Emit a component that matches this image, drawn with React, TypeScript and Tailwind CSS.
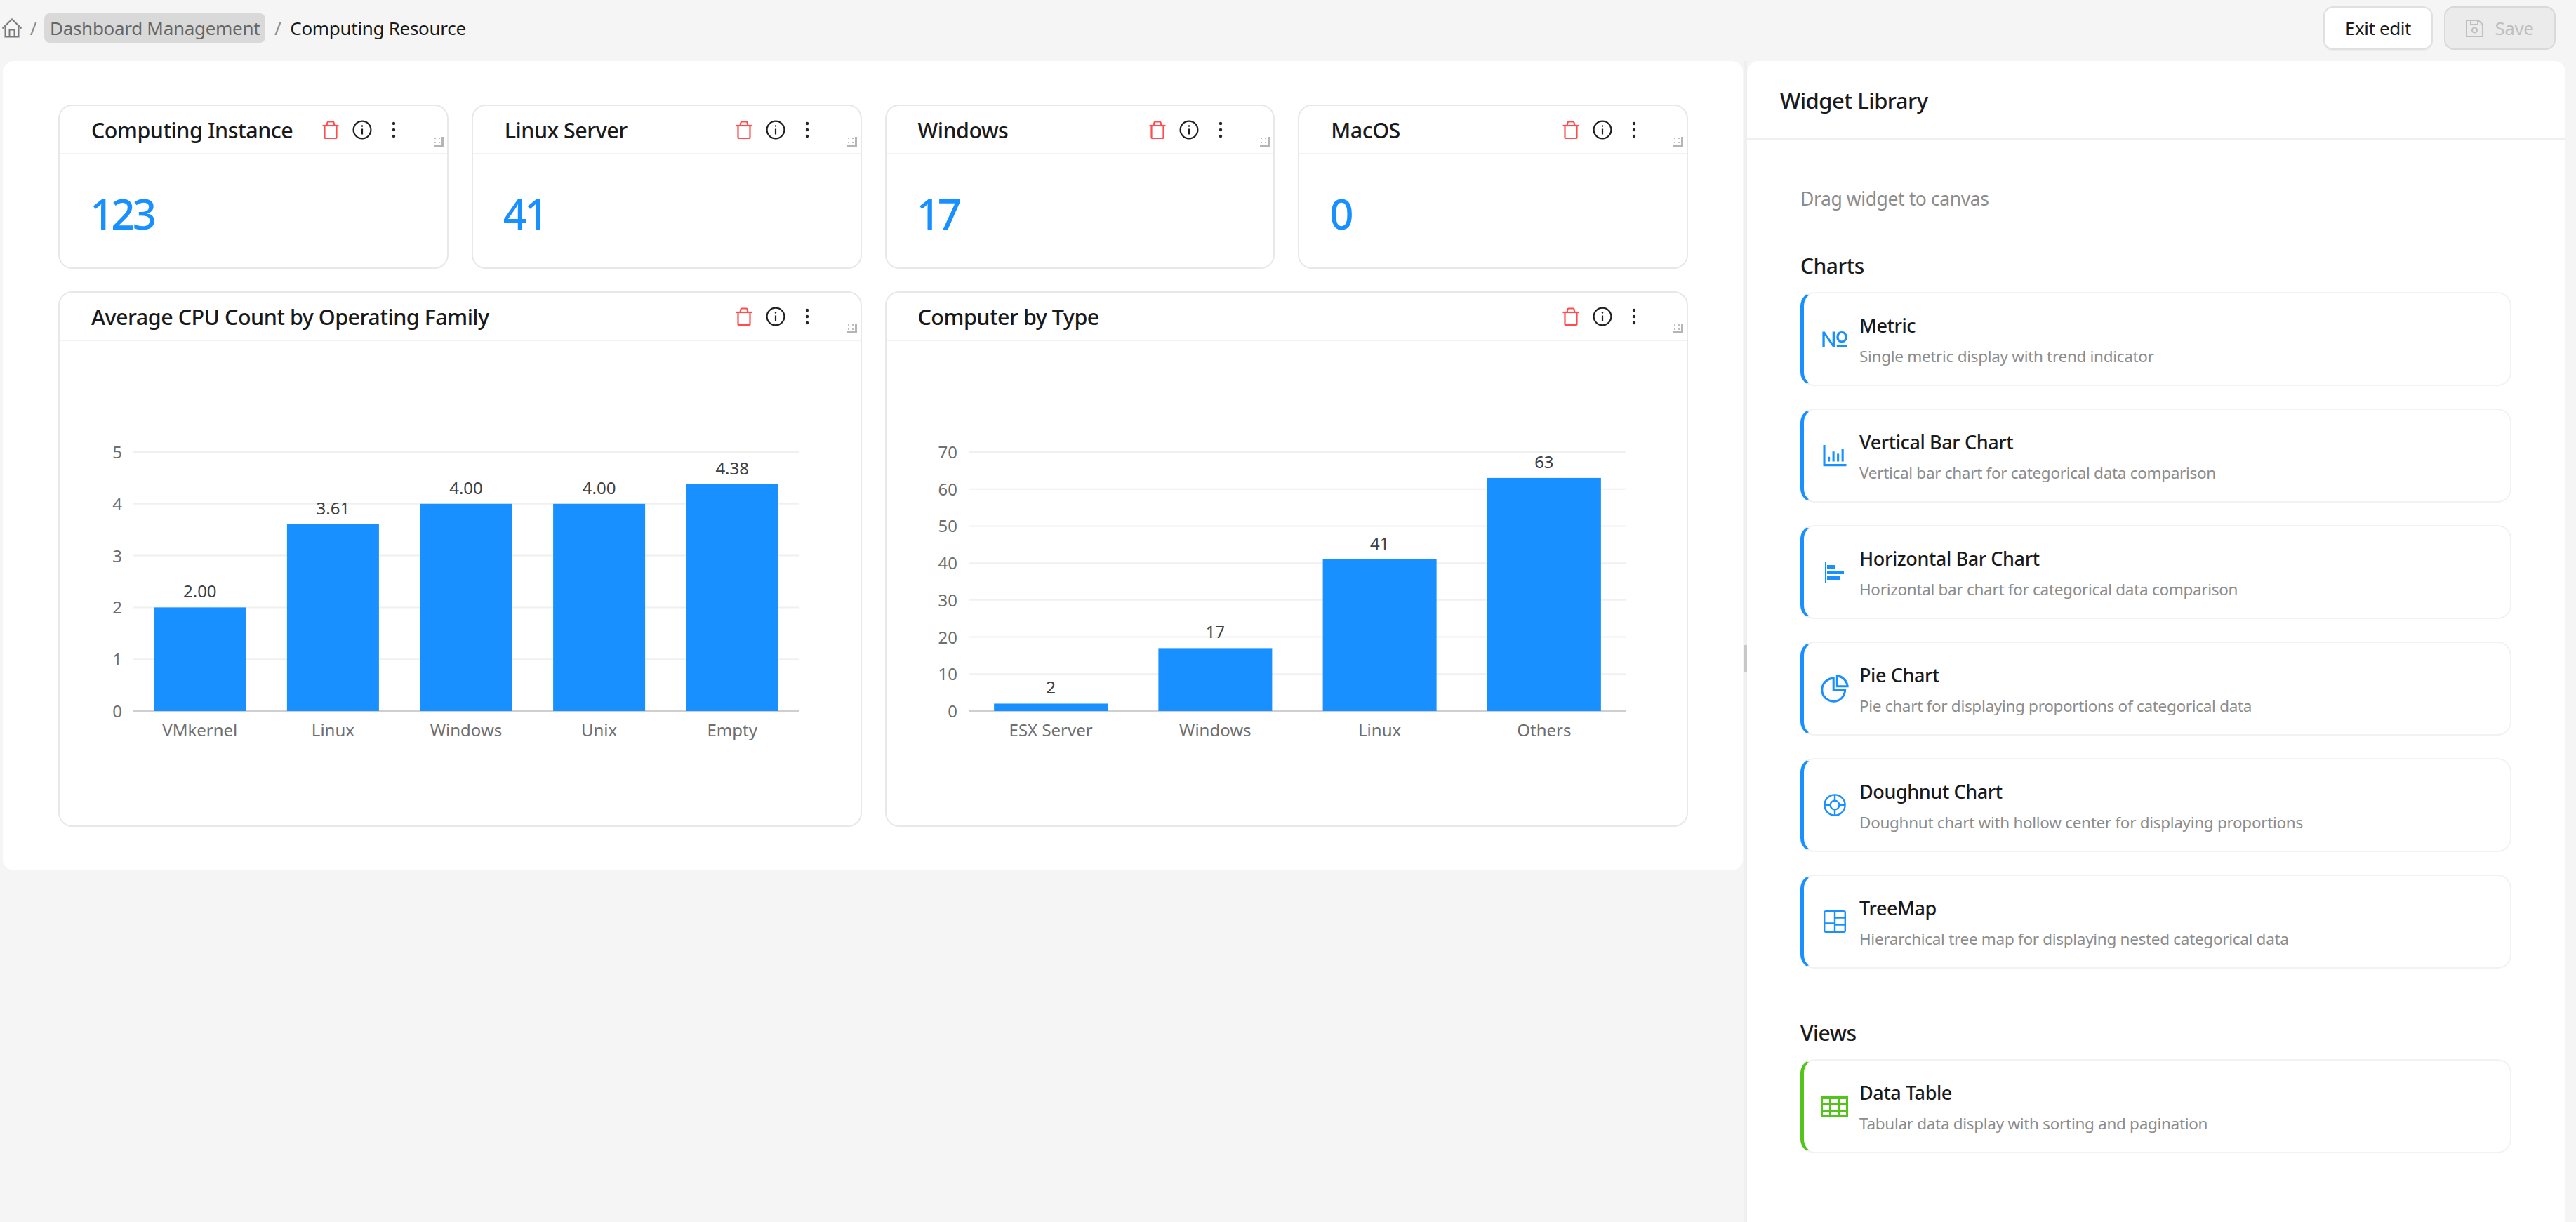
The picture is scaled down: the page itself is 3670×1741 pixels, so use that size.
import React from 'react';
import { AiOutlineFieldNumber, AiOutlineBarChart, AiOutlinePieChart } from 'react-icons/ai';

const BLUE = '#1890ff';

const TrashIcon = () => (
  <svg width="24" height="26" viewBox="0 0 24 26" fill="none" stroke="#ff4d4f" strokeWidth="2.2">
    <path d="M0.5 7h23" />
    <path d="M6.5 7l1-4.5q0.2-1 1.2-1h6.6q1 0 1.2 1l1 4.5" />
    <path d="M3.5 7v17q0 1 1 1h15q1 0 1-1V7" />
  </svg>
);

const InfoIcon = () => (
  <svg width="28" height="28" viewBox="0 0 28 28" fill="none" stroke="#1f1f1f" strokeWidth="2.2">
    <circle cx="14" cy="14" r="12.4" />
    <path d="M14 12.5v8" />
    <circle cx="14" cy="8.5" r="1.2" fill="#1f1f1f" stroke="none" />
  </svg>
);

const MoreIcon = () => (
  <svg width="6" height="24" viewBox="0 0 6 24" fill="#262626">
    <circle cx="3" cy="3" r="2.2" />
    <circle cx="3" cy="12" r="2.2" />
    <circle cx="3" cy="21" r="2.2" />
  </svg>
);

const ResizeHandle = () => (
  <svg className="absolute right-[5px] top-[44px]" width="14" height="14" viewBox="0 0 14 14">
    <path d="M11 0h3v14H0v-3h11z" fill="#b5b5b5" />
    <rect x="1" y="1" width="2" height="2" fill="#bdbdbd" />
    <rect x="7" y="1" width="2" height="2" fill="#bdbdbd" />
    <rect x="1" y="7" width="2" height="2" fill="#bdbdbd" />
    <rect x="7" y="7" width="2" height="2" fill="#bdbdbd" />
  </svg>
);

const HomeIcon = () => (
  <svg width="30" height="28" viewBox="0 0 30 28" fill="none" stroke="#7a7a7a" strokeWidth="2">
    <path d="M1.5 14.5L15 1.5l13.5 13" />
    <path d="M5.5 11v15.5h19V11" />
    <path d="M11.5 26.5V16.5h7v10" />
  </svg>
);

const SaveIcon = () => (
  <svg width="25" height="25" viewBox="0 0 25 25" fill="none" stroke="#bfbfbf" strokeWidth="2">
    <path d="M1 1h17l6 6v17H1z" />
    <path d="M7 1v6h10V1" />
    <circle cx="12.5" cy="15" r="3.5" />
  </svg>
);

const HBarIcon = () => (
  <svg width="28" height="31" viewBox="0 0 28 31" fill={BLUE}>
    <rect x="0" y="0" width="2" height="31" />
    <rect x="3" y="5" width="11" height="5" />
    <rect x="3" y="13" width="24" height="5" />
    <rect x="3" y="21" width="18" height="5" />
  </svg>
);

const DoughnutIcon = () => (
  <svg width="32" height="32" viewBox="0 0 32 32" fill="none" stroke={BLUE} strokeWidth="2.4">
    <circle cx="16" cy="16" r="14.6" />
    <circle cx="16" cy="16" r="6.4" />
    <path d="M16 1.5v8M16 22.5v8M1.5 16h8M22.5 16h8" />
  </svg>
);

const TreeMapIcon = () => (
  <svg width="32" height="32" viewBox="0 0 32 32" fill="none" stroke={BLUE} strokeWidth="2.4">
    <rect x="1.2" y="1.2" width="29.6" height="29.6" rx="2" />
    <path d="M16 1.2v29.6M1.2 18.5h14.8M16 10.5h14.8M16 20.5h14.8" />
  </svg>
);

const TableIcon = () => (
  <svg width="39" height="31" viewBox="0 0 39 31" fill="#52c41a">
    <path fillRule="evenodd" d="M0 0h39v31H0zM3 5v6h9V5zM15 5v6h9V5zM27 5v6h9V5zM3 14v6h9v-6zM15 14v6h9v-6zM27 14v6h9v-6zM3 23v5h9v-5zM15 23v5h9v-5zM27 23v5h9v-5z" />
  </svg>
);

const WidgetCard: React.FC<{ title: string; className: string; children: React.ReactNode }> = ({ title, className, children }) => (
  <div className={`relative border-2 border-[#e8e8e8] rounded-[20px] bg-white ${className}`}>
    <div className="flex items-center justify-between h-[69px] pl-[45px] pr-[53px] border-b-2 border-[#f2f2f2]">
      <span className="pt-[2px] text-[30.5px] font-medium text-[#1a1a1a] tracking-[-0.5px]">{title}</span>
      <div className="flex items-center">
        <span className="w-[45px] flex justify-center"><TrashIcon /></span>
        <span className="w-[45px] flex justify-center"><InfoIcon /></span>
        <span className="w-[45px] flex justify-center"><MoreIcon /></span>
      </div>
    </div>
    <ResizeHandle />
    {children}
  </div>
);

const MetricCard: React.FC<{ title: string; value: string }> = ({ title, value }) => (
  <WidgetCard title={title} className="h-[234px]">
    <div className="pl-[43px] pt-[48px] text-[60px] leading-[72px] font-medium tracking-[-4px] text-[#1890ff]">{value}</div>
  </WidgetCard>
);

type BarChartProps = {
  ticks: number[];
  max: number;
  axisLeft: number;
  axisWidth: number;
  bars: { label: string; value: number; text: string }[];
  barWidth: number;
};

// chart coordinates are the card's own pixels, header excluded
const BarChart: React.FC<BarChartProps> = ({ ticks, max, axisLeft, axisWidth, bars, barWidth }) => {
  const top = 158;
  const bottom = 527;
  const width = 1141;
  const right = axisLeft + axisWidth;
  const y = (v: number) => bottom - (v / max) * (bottom - top);
  const band = axisWidth / bars.length;
  return (
    <svg width={width} height="690" viewBox={`0 0 ${width} 690`} className="block" fontFamily="'Noto Sans', sans-serif">
      {ticks.map((t) => (
        <g key={t}>
          {t > 0 && <line x1={axisLeft} x2={right} y1={y(t)} y2={y(t)} stroke="#f0f0f0" strokeWidth="2" />}
          <text x={axisLeft - 16} y={y(t) + 9} textAnchor="end" fontSize="24" fill="#6e6e6e">{t}</text>
        </g>
      ))}
      <line x1={axisLeft} x2={right} y1={bottom} y2={bottom} stroke="#cfcfcf" strokeWidth="2" />
      {bars.map((b, i) => {
        const cx = axisLeft + band * (i + 0.5);
        return (
          <g key={b.label}>
            <rect x={cx - barWidth / 2} y={y(b.value)} width={barWidth} height={bottom - y(b.value)} fill={BLUE} />
            <text x={cx} y={y(b.value) - 14} textAnchor="middle" fontSize="24" fill="#404040">{b.text}</text>
            <text x={cx} y={bottom + 36} textAnchor="middle" fontSize="24" fill="#6e6e6e">{b.label}</text>
          </g>
        );
      })}
    </svg>
  );
};

const LibraryItem: React.FC<{ icon: React.ReactNode; title: string; desc: string; green?: boolean }> = ({ icon, title, desc, green }) => (
  <div className={`flex items-center h-[134px] rounded-[20px] border-2 border-[#f2f2f2] border-l-[5px] ${green ? 'border-l-[#52c41a]' : 'border-l-[#1890ff]'}`}>
    <div className="w-[79px] flex justify-center pl-[8px] shrink-0">{icon}</div>
    <div className="pt-[2px]">
      <div className="text-[27px] leading-[36px] font-medium text-[#1a1a1a] tracking-[-0.4px]">{title}</div>
      <div className="text-[22.5px] leading-[30px] mt-[11px] text-[#8c8c8c] tracking-[-0.3px]">{desc}</div>
    </div>
  </div>
);

const App: React.FC = () => {
  return (
    <div className="w-[3670px] h-[1741px] overflow-hidden bg-[#f5f5f5] font-['Noto_Sans',sans-serif]">
      <header className="flex items-center justify-between h-[87px] pb-[7px] pl-[2px] pr-[29px]">
        <div className="flex items-center text-[26px] tracking-[-0.3px]">
          <HomeIcon />
          <span className="w-[31px] text-center text-[#8c8c8c]">/</span>
          <span className="h-[42px] leading-[42px] px-[8px] rounded-[8px] bg-[#d9d9d9] text-[#666666]">Dashboard Management</span>
          <span className="w-[35px] text-center text-[#8c8c8c]">/</span>
          <span className="text-[#1a1a1a]">Computing Resource</span>
        </div>
        <div className="flex items-center gap-[16px]">
          <button className="w-[156px] h-[62px] bg-white border-2 border-[#e0e0e0] rounded-[14px] shadow-[0_2px_0_rgba(0,0,0,0.03)] text-[26px] text-[#1a1a1a] tracking-[-0.4px]">Exit edit</button>
          <button className="flex items-center justify-center gap-[16px] w-[159px] h-[62px] bg-[#ebebeb] border-2 border-[#d9d9d9] rounded-[14px] text-[26px] text-[#bfbfbf] tracking-[-0.4px]">
            <SaveIcon />
            Save
          </button>
        </div>
      </header>
      <div className="flex h-[1654px]">
        <main className="ml-[4px] w-[2479px] h-[1153px] bg-white rounded-[16px] pt-[62px] pl-[79px]">
          <div className="grid grid-cols-4 gap-x-[33px] gap-y-[32px] w-[2322px]">
            <MetricCard title="Computing Instance" value="123" />
            <MetricCard title="Linux Server" value="41" />
            <MetricCard title="Windows" value="17" />
            <MetricCard title="MacOS" value="0" />
            <WidgetCard title="Average CPU Count by Operating Family" className="col-span-2 h-[763px]">
              <BarChart
                ticks={[0, 1, 2, 3, 4, 5]}
                max={5}
                axisLeft={105}
                axisWidth={948}
                barWidth={131}
                bars={[
                  { label: 'VMkernel', value: 2, text: '2.00' },
                  { label: 'Linux', value: 3.61, text: '3.61' },
                  { label: 'Windows', value: 4, text: '4.00' },
                  { label: 'Unix', value: 4, text: '4.00' },
                  { label: 'Empty', value: 4.38, text: '4.38' },
                ]}
              />
            </WidgetCard>
            <WidgetCard title="Computer by Type" className="col-span-2 h-[763px]">
              <BarChart
                ticks={[0, 10, 20, 30, 40, 50, 60, 70]}
                max={70}
                axisLeft={117}
                axisWidth={937}
                barWidth={162}
                bars={[
                  { label: 'ESX Server', value: 2, text: '2' },
                  { label: 'Windows', value: 17, text: '17' },
                  { label: 'Linux', value: 41, text: '41' },
                  { label: 'Others', value: 63, text: '63' },
                ]}
              />
            </WidgetCard>
          </div>
        </main>
        <div className="ml-[2px] w-[4px] bg-[#efefef] pt-[832px]">
          <div className="h-[39px] bg-[#c8c8c8]" />
        </div>
        <aside className="w-[1166px] bg-white rounded-t-[16px]">
          <div className="flex items-center h-[112px] pt-[2px] pl-[47px] border-b-2 border-[#f0f0f0] text-[31px] font-medium text-[#1a1a1a] tracking-[-0.5px]">
            Widget Library
          </div>
          <div className="pl-[76px] pr-[77px]">
            <div className="h-[40px] leading-[40px] mt-[64px] text-[26.5px] text-[#8c8c8c] tracking-[-0.4px]">Drag widget to canvas</div>
            <div className="h-[40px] leading-[40px] mt-[56px] text-[30px] font-medium text-[#1a1a1a] tracking-[-0.5px]">Charts</div>
            <div className="flex flex-col gap-[32px] mt-[17px]">
              <LibraryItem icon={<AiOutlineFieldNumber size={46} color={BLUE} />} title="Metric" desc="Single metric display with trend indicator" />
              <LibraryItem icon={<AiOutlineBarChart size={44} color={BLUE} />} title="Vertical Bar Chart" desc="Vertical bar chart for categorical data comparison" />
              <LibraryItem icon={<HBarIcon />} title="Horizontal Bar Chart" desc="Horizontal bar chart for categorical data comparison" />
              <LibraryItem icon={<AiOutlinePieChart size={46} color={BLUE} />} title="Pie Chart" desc="Pie chart for displaying proportions of categorical data" />
              <LibraryItem icon={<DoughnutIcon />} title="Doughnut Chart" desc="Doughnut chart with hollow center for displaying proportions" />
              <LibraryItem icon={<TreeMapIcon />} title="TreeMap" desc="Hierarchical tree map for displaying nested categorical data" />
            </div>
            <div className="h-[40px] leading-[40px] mt-[72px] text-[30px] font-medium text-[#1a1a1a] tracking-[-0.5px]">Views</div>
            <div className="mt-[17px]">
              <LibraryItem green icon={<TableIcon />} title="Data Table" desc="Tabular data display with sorting and pagination" />
            </div>
          </div>
        </aside>
      </div>
    </div>
  );
};

export default App;
